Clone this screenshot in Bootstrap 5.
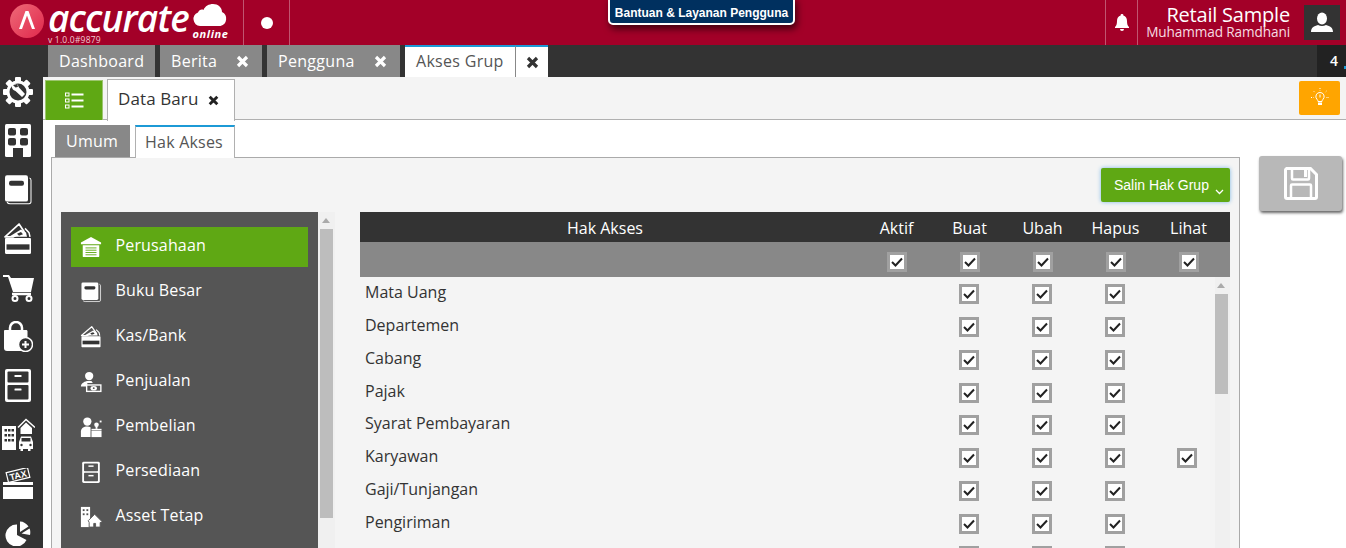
<!DOCTYPE html>
<html lang="id">
<head>
<meta charset="utf-8">
<title>Akses Grup</title>
<link href="https://cdn.jsdelivr.net/npm/bootstrap@5.3.0/dist/css/bootstrap.min.css" rel="stylesheet">
<style>
html,body{height:100%;overflow:hidden;}
body{font-family:"Open Sans",sans-serif;font-size:16px;color:#333;background:#fff;position:relative;}
.shell{height:548px;overflow:hidden;}
.topbar{height:45px;background:#a30028;color:#fff;flex:none;}
.logo-box{width:243px;height:45px;padding-left:9px;}
.logo-mark{width:36px;height:36px;flex:none;margin-top:3px;}
.logo-words{margin-left:3px;width:144px;flex:none;}
.logo-name{font-family:"Open Sans",sans-serif;font-style:italic;font-size:37px;line-height:36px;height:35px;letter-spacing:-.85px;font-weight:600;white-space:nowrap;}
.logo-ver{font-size:8.5px;line-height:9px;letter-spacing:.2px;color:#f1c9d2;white-space:nowrap;}
.logo-cloud{width:37px;flex:none;}
.logo-online{font-size:11px;line-height:11px;font-weight:700;font-style:italic;letter-spacing:.6px;text-align:center;margin-top:1px;}
.top-cell{height:45px;border-left:1px solid #c05570;}
.dot-cell{width:47px;border-right:1px solid #c05570;}
.white-dot{width:12px;height:12px;border-radius:50%;background:#fff;display:block;}
.help-tip{position:absolute;left:608px;top:-3px;width:187px;height:28px;background:#00305f;border:2px solid #fff;border-radius:0 0 5px 5px;color:#fff;font-family:"Liberation Sans",sans-serif;font-size:12px;font-weight:700;line-height:24px;text-align:center;box-shadow:2px 4px 7px rgba(0,0,0,.6);white-space:nowrap;padding-top:2px;}
.bell-cell{width:33px;border-right:1px solid #c05570;}
.user-box{text-align:right;padding:4px 14px 0 8px;width:166px;}
.user-co{font-size:20px;line-height:21px;white-space:nowrap;letter-spacing:-.2px;}
.user-name{font-size:13.6px;line-height:13px;white-space:nowrap;letter-spacing:-.1px;color:#f7dce2;}
.avatar{width:36px;height:35px;background:#333;margin:5px 6px 0 0;flex:none;}
.side{width:43px;background:#333;flex:none;}
.side-tile{height:49px;width:36px;flex:none;}
.side-list{padding-top:22px;}
.main{min-width:0;}
.tabstrip{height:32px;background:#333;padding-left:5px;flex:none;}
.wtab{height:32px;background:#888;color:#fff;margin-right:5px;padding-left:11px;line-height:32px;white-space:nowrap;letter-spacing:.3px;}
.wtab-x{width:39px;}
.wtab-active{background:#fff;color:#555;border-top:2px solid #1c9ad6;margin-right:0;padding-right:0;line-height:29px;border-right:1px solid #888;}
.wtab-close{width:32px;height:32px;background:#fff;border-top:2px solid #1c9ad6;}
.tab-count{width:29px;background:#222;color:#fff;font-size:14px;line-height:32px;padding-left:13px;font-weight:600;}
.tab-tick{width:2px;height:3px;background:#1c9ad6;margin:21px 0 0 auto;}
.toolbar{height:43px;background:#f4f4f4;border-bottom:1px solid #b0b0b0;flex:none;padding-left:2px;}
.list-btn{width:58px;height:40px;background:#5fa814;margin-top:3px;border:1px solid #9cc56f;border-bottom:0;}
.doc-tab{height:42px;width:128px;background:#fff;border:1px solid #b0b0b0;border-bottom:0;margin:2px 0 -2px 4px;padding:0 0 3px 10px;color:#333;font-size:17px;letter-spacing:.1px;position:relative;z-index:1;}
.doc-x{margin-left:10px;margin-top:2px;}
.tip-btn{width:41px;height:34px;background:#ffa500;border-radius:2px;margin:4px 6px 0 0;}
.subtabs{height:37px;padding:5px 0 0 12px;flex:none;}
.subtab{height:32px;background:#888;color:#fff;line-height:32px;width:75px;text-align:center;margin-right:5px;letter-spacing:.2px;padding-right:1px;}
.subtab-on{height:33px;width:100px;background:#fff;color:#555;border:1px solid #b0b0b0;border-top:2px solid #1c9ad6;border-bottom:0;position:relative;z-index:1;line-height:31px;padding-right:2px;}
.work{padding-left:8px;min-height:0;}
.panel{width:1189px;background:#f4f4f4;border:1px solid #aaa;border-bottom:0;padding:10px 9px 0 9px;}
.copy-btn{height:34px;width:129px;background:#5fa814;color:#fff;font-family:"Liberation Sans",sans-serif;font-size:14px;border-radius:2px;box-shadow:0 0 4px #7fb8e6;padding:0 0 0 13px;line-height:34px;margin-left:auto;white-space:nowrap;}
.caret-mini{width:9px;height:6px;margin:21px 0 0 6px;}
.panel-row{margin-top:10px;}
.menu{width:257px;background:#555;padding:15px 10px 0;height:336px;flex:none;}
.menu-item{height:40px;margin-bottom:5px;color:#fff;padding-left:9px;letter-spacing:.15px;}
.menu-on{background:#5fa814;}
.menu-ic{width:22px;height:22px;margin-right:13.5px;flex:none;}
.menu-lbl{margin-top:-4px;}
.vbar{width:17px;background:#f0f0f0;flex:none;padding:17px 2px 0 2px;position:relative;}
.vbar-up{position:absolute;top:6px;left:4px;width:0;height:0;border:4px solid transparent;border-top:0;border-bottom:5px solid #aaa;}
.vbar-thumb{background:#bdbdbd;height:289px;}
.grantbox{margin-left:25px;width:870px;}
.ghead{display:grid;grid-template-columns:1fr repeat(5,73px);padding-right:5px;}
.ghead-top{height:30px;background:#333;color:#fff;line-height:32px;text-align:center;}
.ghead-first{padding-right:10px;}
.ghead-sub{height:35px;background:#888;align-items:center;justify-items:center;padding:4px 5px 0 0;}
.gbody{height:271px;overflow:hidden;}
.grows{width:855px;flex:none;padding-top:1px;}
.grow-line{display:grid;grid-template-columns:1fr 73px 73px 73px 63.5px;height:32.75px;align-items:center;justify-items:center;}
.grow-line>span:first-child{justify-self:start;padding-left:5px;margin-top:-4px;color:#333;}
.cell-last{padding-right:1px;padding-left:8px;}
.chk{width:20px;height:20px;border:3px solid #a0a0a0;background:#fff;display:flex;align-items:center;justify-content:center;}
.chk svg{width:12px;height:10px;}
.gbar{width:15px;padding:17px 2px 0 0;height:271px;}
.gbar .vbar-thumb{height:100px;width:13px;}
.gbar .vbar-up{top:6px;left:2px;}
.save-wrap{padding:0 0 0 19px;}
.save-btn{width:83px;height:55px;background:#b8b8b8;border-radius:3px;box-shadow:1px 2px 3px rgba(0,0,0,.6);margin-top:-1px;}
</style>
</head>
<body>
<svg width="0" height="0" class="d-block position-absolute">
<defs>
<symbol id="ic-ledger" viewBox="0 0 30 30"><path d="M4 2h19a2 2 0 0 1 2 2v20a2 2 0 0 1-2 2H4a2 2 0 0 1-2-2V4a2 2 0 0 1 2-2z" fill="#fff"/><path d="M26.500 4.500c1 .2 1.500.8 1.500 2V26a2 2 0 0 1-2 2H7c-1.500 0-2.500-.7-3-1.500" fill="none" stroke="#fff"/><rect x="6" y="7" width="15" height="4.500" rx="2" fill="#333"/></symbol>
<symbol id="ic-wallet" viewBox="0 0 30 30"><path d="M2 13 16 1l5 7-11 5z" fill="none" stroke="#fff" stroke-width="1.700" stroke-linejoin="round"/><path d="M6 13 18 6l5 3 1 4z" fill="#fff"/><path d="M14 10l4-1.500 2 2-4 1.500z" fill="#333"/><path d="M22 5l4 4 1 4" fill="none" stroke="#fff" stroke-width="1.500"/><path d="M3 14h24a1 1 0 0 1 1 1v13a1 1 0 0 1-1 1H3a1 1 0 0 1-1-1V15a1 1 0 0 1 1-1z" fill="#fff"/><rect x="3.500" y="20" width="23" height="5" fill="#333"/></symbol>
</defs>
</svg>
<div class="shell d-flex flex-column">
<header class="topbar d-flex">
<div class="logo-box d-flex">
<svg class="logo-mark" viewBox="0 0 36 36"><defs><linearGradient id="lg" x1="0" y1="0" x2="1" y2="1"><stop offset="0" stop-color="#ef6a78"/><stop offset="1" stop-color="#e0284c"/></linearGradient></defs><circle cx="18" cy="18" r="17" fill="url(#lg)"/><path d="M10 26 16.500 8h3L26 26h-3L18 12.500 13 26z" fill="#fff"/></svg>
<div class="logo-words"><div class="logo-name text-white">accurate</div><div class="logo-ver">v 1.0.0#9879</div></div>
<div class="logo-cloud"><svg width="36" height="23" viewBox="0 0 36 23" class="d-block mt-1"><path d="M8 22a7 7 0 0 1-2-13.500C7 6 9.500 5 11.500 6 13 2 17 0 21 0c5 0 9 3.500 9 8a7.500 7.500 0 0 1-1.500 14z" fill="#fff"/></svg><div class="logo-online">online</div></div>
</div>
<div class="top-cell dot-cell d-flex align-items-center justify-content-center"><span class="white-dot"></span></div>
<div class="help-tip">Bantuan &amp; Layanan Pengguna</div>
<div class="ms-auto top-cell bell-cell d-flex align-items-center justify-content-center"><svg width="14" height="17" viewBox="0 0 14 17"><path d="M7 0a1.300 1.300 0 0 1 1.300 1.600C10.800 2.200 12 4.300 12 7c0 3 .6 4.700 2 6v1H0v-1c1.400-1.300 2-3 2-6 0-2.700 1.200-4.800 3.700-5.400A1.300 1.300 0 0 1 7 0zM5 15h4a2 2 0 0 1-4 0z" fill="#fff"/></svg></div>
<div class="user-box"><div class="user-co">Retail Sample</div><div class="user-name">Muhammad Ramdhani</div></div>
<div class="avatar d-flex align-items-center justify-content-center"><svg width="22" height="21" viewBox="0 0 22 21"><ellipse cx="11" cy="6.500" rx="5" ry="6" fill="#fff"/><path d="M0 20c0-4.500 3-6 7-7 2.500 1.300 5.500 1.300 8 0 4 1 7 2.500 7 7z" fill="#fff"/></svg></div>
</header>
<div class="d-flex flex-grow-1" style="min-height:0">
<aside class="side side-list d-flex flex-column">
<div class="side-tile d-flex align-items-center justify-content-center"><svg width="30" height="30" viewBox="0 0 30 30"><g fill="#fff"><circle cx="15" cy="15" r="11.500"/><rect x="12" y="0" width="6" height="30" rx="1"/><rect x="12" y="0" width="6" height="30" rx="1" transform="rotate(45 15 15)"/><rect x="12" y="0" width="6" height="30" rx="1" transform="rotate(90 15 15)"/><rect x="12" y="0" width="6" height="30" rx="1" transform="rotate(135 15 15)"/></g><circle cx="15" cy="15" r="8.500" fill="#333"/><path d="M9.500 7.500c3-1.500 6.500 0 7.500 3l6 6.500-3 3-6.500-6c-3-1-4.500-4-3.500-7l3.500 3.500 2.200-.6.600-2.200z" fill="#fff" transform="translate(-1 0)"/></svg></div>
<div class="side-tile d-flex align-items-center justify-content-center"><svg width="26" height="33" viewBox="0 0 26 33"><rect x="0" y="0" width="26" height="33" rx="1.500" fill="#fff"/><g fill="#333"><rect x="3" y="4" width="8" height="7.500" rx="2"/><rect x="15" y="4" width="8" height="7.500" rx="2"/><rect x="3" y="14" width="8" height="7.500" rx="2"/><rect x="15" y="14" width="8" height="7.500" rx="2"/><rect x="8" y="24" width="10" height="9"/></g></svg></div>
<div class="side-tile d-flex align-items-center justify-content-center"><svg width="30" height="33" viewBox="0 0 30 30" preserveAspectRatio="none"><use href="#ic-ledger"/></svg></div>
<div class="side-tile d-flex align-items-center justify-content-center"><svg width="30" height="32" viewBox="0 0 30 30" preserveAspectRatio="none"><use href="#ic-wallet"/></svg></div>
<div class="side-tile d-flex align-items-center justify-content-center"><svg width="33" height="28" viewBox="0 0 33 28"><path d="M1 1h6l2 3h23l-3 14H11L6 3H1z" fill="#fff"/><path d="M10 20h19" stroke="#fff" stroke-width="2.500" fill="none"/><circle cx="13" cy="24.500" r="2.500" fill="#333" stroke="#fff" stroke-width="2"/><circle cx="27" cy="24.500" r="2.500" fill="#333" stroke="#fff" stroke-width="2"/></svg></div>
<div class="side-tile d-flex align-items-center justify-content-center"><svg width="30" height="31" viewBox="0 0 30 31"><path d="M7 9V7a6 6 0 0 1 12 0v2" fill="none" stroke="#fff" stroke-width="2.500"/><path d="M2 9h21c1 0 1.500.5 1.500 1.500V30H4a3 3 0 0 1-3-3V10c0-.5.500-1 1-1z" fill="#fff"/><circle cx="22.500" cy="23.500" r="7" fill="#333" stroke="#fff" stroke-width="1.500"/><path d="M19 23.500h7M22.500 20v7" stroke="#fff" stroke-width="2"/></svg></div>
<div class="side-tile d-flex align-items-center justify-content-center"><svg width="26" height="33" viewBox="0 0 26 33"><rect width="26" height="33" rx="2" fill="#fff"/><rect x="2.500" y="2.500" width="21" height="11" rx="1" fill="#333"/><rect x="2.500" y="16" width="21" height="14.500" rx="1" fill="#333"/><rect x="9.500" y="6" width="7" height="2" rx=".5" fill="#fff"/><rect x="9.500" y="19.500" width="7" height="2" rx=".5" fill="#fff"/></svg></div>
<div class="side-tile d-flex align-items-center justify-content-center"><svg width="34" height="34" viewBox="0 0 34 34"><rect x="1" y="8" width="14" height="24" fill="#fff"/><g fill="#333"><rect x="3.500" y="11" width="2.500" height="2.500"/><rect x="7" y="11" width="2.500" height="2.500"/><rect x="10.500" y="11" width="2.500" height="2.500"/><rect x="3.500" y="16" width="2.500" height="2.500"/><rect x="7" y="16" width="2.500" height="2.500"/><rect x="10.500" y="16" width="2.500" height="2.500"/><rect x="3.500" y="21" width="2.500" height="2.500"/><rect x="7" y="21" width="2.500" height="2.500"/><rect x="10.500" y="21" width="2.500" height="2.500"/></g><path d="M17 9.500 25 1.500 34 9.500" fill="none" stroke="#fff" stroke-width="1.500"/><path d="M19.500 10 25 4.500 31 10v6H19.500z" fill="#fff"/><path d="M18 24l2-5.500h10l2 5.500v7h-2.500v2H27v-2h-4h-1v2h-2.500v-2H18z" fill="#fff"/><rect x="20.500" y="20" width="9" height="3.500" fill="#333"/><circle cx="20.500" cy="27" r="1.200" fill="#333"/><circle cx="29.500" cy="27" r="1.200" fill="#333"/></svg></div>
<div class="side-tile d-flex align-items-center justify-content-center"><svg width="32" height="31" viewBox="0 0 32 31"><rect x="1" y="14" width="30" height="3" fill="#fff"/><rect x="1" y="19" width="30" height="12" fill="#fff"/><g transform="rotate(-14 16 7)"><rect x="5" y="2" width="22" height="10" fill="none" stroke="#fff" stroke-width="1.200"/><text x="16" y="10.500" font-family="Liberation Sans,sans-serif" font-size="9" font-weight="700" fill="#fff" text-anchor="middle">TAX</text></g></svg></div>
<div class="side-tile d-flex align-items-center justify-content-center"><svg width="26" height="26" viewBox="0 0 26 26"><path d="M12 4.500V15l9.500 5A11 11 0 1 1 12 4.500z" fill="#fff"/><path d="M15 1.500v10.500l8.500-5.500C21.500 3.500 18.500 1.500 15 1.500z M16.500 13.500 24.500 8.500c1 2 1 4.500.500 6.500z" fill="#fff"/></svg></div>
</aside>
<div class="main flex-grow-1 d-flex flex-column">
<nav class="tabstrip d-flex">
<div class="wtab" style="width:107px">Dashboard</div>
<div class="wtab d-flex" style="width:102px"><span class="flex-grow-1">Berita</span><span class="wtab-x d-flex align-items-center justify-content-center"><svg width="13" height="13" viewBox="0 0 13 13"><path d="M2 2l9 9M11 2l-9 9" stroke="#fff" stroke-width="3.200"/></svg></span></div>
<div class="wtab d-flex" style="width:133px"><span class="flex-grow-1">Pengguna</span><span class="wtab-x d-flex align-items-center justify-content-center"><svg width="13" height="13" viewBox="0 0 13 13"><path d="M2 2l9 9M11 2l-9 9" stroke="#fff" stroke-width="3.200"/></svg></span></div>
<div class="wtab wtab-active" style="width:111px">Akses Grup</div>
<div class="wtab-close d-flex align-items-center justify-content-center"><svg width="13" height="13" viewBox="0 0 13 13"><path d="M2 2l9 9M11 2l-9 9" stroke="#333" stroke-width="3.200"/></svg></div>
<div class="tab-count ms-auto d-flex"><span>4</span><span class="tab-tick"></span></div>
</nav>
<div class="toolbar d-flex">
<div class="list-btn d-flex align-items-center justify-content-center"><svg width="19" height="17" viewBox="0 0 19 17"><g fill="none" stroke="#fff"><rect x=".5" y="1" width="3.500" height="3"/><rect x=".5" y="7" width="3.500" height="3"/><rect x=".5" y="13" width="3.500" height="3"/></g><g fill="#fff"><rect x="6.500" y="1.500" width="12" height="2"/><rect x="6.500" y="7.500" width="12" height="2"/><rect x="6.500" y="13.500" width="12" height="2"/></g></svg></div>
<div class="doc-tab d-flex align-items-center"><span>Data Baru</span><svg class="doc-x" width="11" height="11" viewBox="0 0 13 13"><path d="M2 2l9 9M11 2l-9 9" stroke="#222" stroke-width="3.400"/></svg></div>
<div class="tip-btn ms-auto d-flex align-items-center justify-content-center"><svg width="18" height="20" viewBox="0 0 18 20"><path d="M9 4.500a4 4 0 0 0-3 6.800c.6.700 1 1.200 1 2.200h4c0-1 .4-1.500 1-2.200a4 4 0 0 0-3-6.800z" fill="none" stroke="#fff"/><rect x="7" y="14.500" width="4" height="2.500" fill="#fff"/><path d="M9 6.500v3" stroke="#fff"/><path d="M9 0v2.500M2.500 3 4 4.500M15.500 3 14 4.500M0 9.500h2.500M15.500 9.500H18" stroke="#fff" stroke-dasharray="1 1"/></svg></div>
</div>
<div class="subtabs d-flex"><div class="subtab">Umum</div><div class="subtab subtab-on">Hak Akses</div></div>
<div class="work flex-grow-1 d-flex">
<section class="panel">
<div class="d-flex"><div class="copy-btn d-flex"><span>Salin Hak Grup</span><svg class="caret-mini" viewBox="0 0 9 6"><path d="M1 1l3.500 3.500L8 1" fill="none" stroke="#fff" stroke-width="1.300"/></svg></div></div>
<div class="panel-row d-flex">
<div class="menu">
<div class="menu-item menu-on d-flex align-items-center"><svg class="menu-ic" viewBox="0 0 24 24"><path d="M1 7 12 1l11 6v2H1z" fill="#fff"/><path d="M3 10h18v12a1 1 0 0 1-1 1H4a1 1 0 0 1-1-1z" fill="#fff"/><path d="M6 13h12M6 15.500h12M6 18h12M6 20.500h12" stroke="#5fa814" stroke-width="1"/></svg><span class="menu-lbl">Perusahaan</span></div>
<div class="menu-item d-flex align-items-center"><svg class="menu-ic" viewBox="0 0 30 30"><use href="#ic-ledger"/></svg><span class="menu-lbl">Buku Besar</span></div>
<div class="menu-item d-flex align-items-center"><svg class="menu-ic" viewBox="0 0 30 30"><use href="#ic-wallet"/></svg><span class="menu-lbl">Kas/Bank</span></div>
<div class="menu-item d-flex align-items-center"><svg class="menu-ic" viewBox="0 0 24 24"><circle cx="10" cy="5.500" r="4.500" fill="#fff"/><path d="M1 17c0-3 3-5 6.500-6h5L14 13H8v4z" fill="#fff"/><rect x="6.500" y="14.500" width="17" height="8.500" fill="#fff"/><rect x="8" y="16" width="14" height="5.500" fill="#555"/><ellipse cx="15" cy="18.750" rx="3.500" ry="2.500" fill="#fff"/><circle cx="15" cy="18.750" r="1" fill="#555"/></svg><span class="menu-lbl">Penjualan</span></div>
<div class="menu-item d-flex align-items-center"><svg class="menu-ic" viewBox="0 0 24 24"><circle cx="8" cy="6" r="4.500" fill="#fff"/><path d="M1 23v-6c0-3.500 3-5.500 7-5.500 1.500 0 2.500.3 3.500.8V23z" fill="#fff"/><rect x="12.500" y="16" width="11" height="7" fill="#fff"/><rect x="12.500" y="14" width="11" height="1.500" fill="#fff"/><circle cx="18" cy="9.500" r="2.500" fill="#fff"/><rect x="17" y="11" width="2" height="3" fill="#fff"/><rect x="21.500" y="5" width="2" height="2" fill="#fff"/></svg><span class="menu-lbl">Pembelian</span></div>
<div class="menu-item d-flex align-items-center"><svg class="menu-ic" viewBox="0 0 30 30"><rect x="3" y="1" width="24" height="29" rx="2" fill="#fff"/><rect x="5.500" y="3.500" width="19" height="10.500" rx="1" fill="#555"/><rect x="5.500" y="16" width="19" height="11.500" rx="1" fill="#555"/><rect x="11.500" y="6" width="7" height="2" fill="#fff"/><rect x="11.500" y="19" width="7" height="2" fill="#fff"/></svg><span class="menu-lbl">Persediaan</span></div>
<div class="menu-item d-flex align-items-center"><svg class="menu-ic" viewBox="0 0 24 24"><rect x="1" y="1" width="10" height="22" fill="#fff"/><g fill="#555"><rect x="3" y="3.500" width="2" height="2"/><rect x="7" y="3.500" width="2" height="2"/><rect x="3" y="8" width="2" height="2"/><rect x="7" y="8" width="2" height="2"/></g><path d="M9 16l7-7 8 8v1h-2v5h-5v-4h-2v4H10v-5z" fill="#fff" stroke="#555"/></svg><span class="menu-lbl">Asset Tetap</span></div>
</div>
<div class="vbar"><span class="vbar-up"></span><div class="vbar-thumb"></div></div>
<div class="grantbox">
<div class="ghead ghead-top"><div class="ghead-first">Hak Akses</div><div>Aktif</div><div>Buat</div><div>Ubah</div><div>Hapus</div><div>Lihat</div></div>
<div class="ghead ghead-sub"><div></div>
<span class="chk"><svg viewBox="0 0 12 10"><path d="M1 5l3.500 3.500L11 1.500" fill="none" stroke="#222" stroke-width="2"/></svg></span><span class="chk"><svg viewBox="0 0 12 10"><path d="M1 5l3.500 3.500L11 1.500" fill="none" stroke="#222" stroke-width="2"/></svg></span><span class="chk"><svg viewBox="0 0 12 10"><path d="M1 5l3.500 3.500L11 1.500" fill="none" stroke="#222" stroke-width="2"/></svg></span><span class="chk"><svg viewBox="0 0 12 10"><path d="M1 5l3.500 3.500L11 1.500" fill="none" stroke="#222" stroke-width="2"/></svg></span><span class="chk"><svg viewBox="0 0 12 10"><path d="M1 5l3.500 3.500L11 1.500" fill="none" stroke="#222" stroke-width="2"/></svg></span></div>
<div class="gbody d-flex">
<div class="grows" id="grows"></div>
<div class="vbar gbar"><span class="vbar-up"></span><div class="vbar-thumb"></div></div>
</div>
</div>
</div>
</section>
<div class="save-wrap"><div class="save-btn d-flex align-items-center justify-content-center"><svg width="34" height="33" viewBox="0 0 34 33"><path d="M2 1.500h24.500l6 6V30a1.500 1.500 0 0 1-1.500 1.500H3A1.500 1.500 0 0 1 1.500 30V3A1.500 1.500 0 0 1 3 1.500z" fill="none" stroke="#fff" stroke-width="3"/><path d="M8 2v9.500a1 1 0 0 0 1 1h15a1 1 0 0 0 1-1V2" fill="none" stroke="#fff" stroke-width="2.500"/><rect x="20" y="3" width="3" height="7" fill="#fff"/><path d="M7 31V18.500a1 1 0 0 1 1-1h18a1 1 0 0 1 1 1V31" fill="none" stroke="#fff" stroke-width="2.500"/></svg></div></div>
</div>
</div>
</div>
</div>
<script src="https://cdn.jsdelivr.net/npm/bootstrap@5.3.0/dist/js/bootstrap.bundle.min.js"></script>
<script>
var rows=[["Mata Uang",0],["Departemen",0],["Cabang",0],["Pajak",0],["Syarat Pembayaran",0],["Karyawan",1],["Gaji/Tunjangan",0],["Pengiriman",0],["",0]];
var c='<span class="chk"><svg viewBox="0 0 12 10"><path d="M1 5l3.500 3.500L11 1.500" fill="none" stroke="#222" stroke-width="2"/></svg></span>';
document.getElementById('grows').innerHTML=rows.map(function(r){return '<div class="grow-line"><span>'+r[0]+'</span>'+c+c+c+'<span class="cell-last">'+(r[1]?c:'')+'</span></div>';}).join('');
</script>
</body>
</html>
